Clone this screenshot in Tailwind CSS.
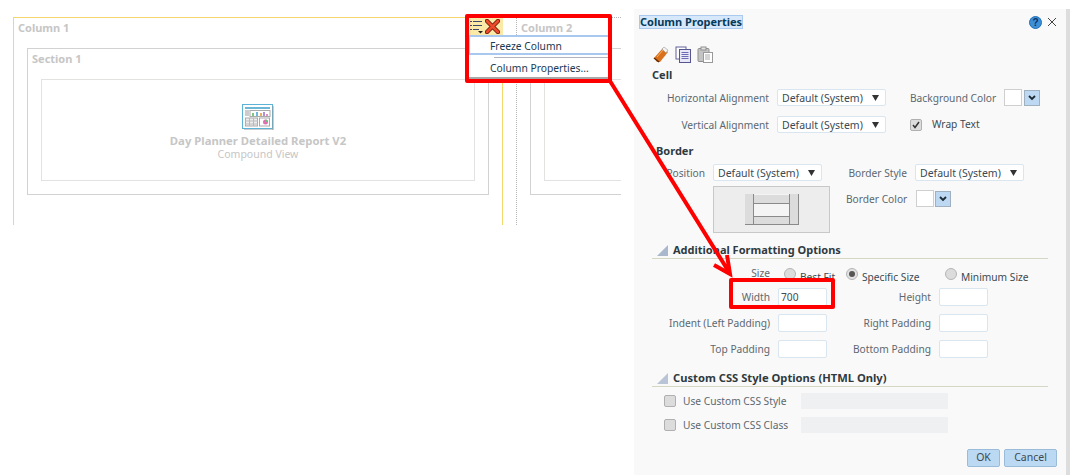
<!DOCTYPE html>
<html lang="en">
<head>
<meta charset="UTF-8">
<title>Column Properties</title>
<script src="https://cdn.jsdelivr.net/npm/@tailwindcss/browser@4"></script>
</head>
<body class="bg-white">
<div class="relative w-[1072px] h-[475px] overflow-hidden flex font-['Noto_Sans',sans-serif] text-[10.2px] leading-[14px] text-[#5c6870] whitespace-nowrap">

  <!-- Layout canvas -->
  <div class="w-[621px] h-[225px] pl-[13px] pt-[17px] flex shrink-0 text-[#c6c6c6]">
    <div class="w-[490px] h-[208px] border-t border-l border-r border-[#f5d76e] pl-[13px]">
      <div class="pl-[4px] h-[30px] pt-[3px] text-[11px] font-bold -ml-[13px]">Column 1</div>
      <div class="w-[462px] h-[147px] border border-[#d2d2d2] pl-[13px]">
        <div class="-ml-[9px] h-[30px] pt-[3px] text-[11px] font-bold">Section 1</div>
        <div class="w-[434px] h-[102px] border border-[#e2e2e0] flex flex-col items-center pt-[24px]">
          <svg width="32" height="26" viewBox="0 0 32 26" class="shrink-0">
            <rect x="0.5" y="0.5" width="30" height="24" fill="#fff" stroke="#5bb4d8"/>
            <path d="M31 2v24H2" fill="none" stroke="#999"/>
            <rect x="3" y="3" width="25" height="2" fill="#6cb6d6"/>
            <path d="M3 7h4M3 9h4M3 11h4" stroke="#999"/>
            <rect x="8" y="6.500" width="20" height="6" fill="#fff" stroke="#aaa"/>
            <rect x="10" y="9" width="2" height="3" fill="#7fc77f"/><rect x="14" y="8" width="2" height="4" fill="#6fb6e0"/><rect x="18" y="9" width="2" height="3" fill="#e8b060"/><rect x="21" y="8" width="2" height="4" fill="#b08fd8"/><rect x="24" y="10" width="2" height="2" fill="#e88fc0"/>
            <rect x="3.500" y="14" width="12" height="8" fill="#eee" stroke="#aaa"/>
            <path d="M3 17h13M3 20h13M7.500 14v8M11.500 14v8" stroke="#bbb"/>
            <rect x="17.500" y="14" width="10" height="8" fill="#fff" stroke="#aaa"/>
            <circle cx="23.500" cy="18" r="2.500" fill="#e070b0"/><path d="M23.500 18v-2.500a2.500 2.500 0 0 1 2.500 2.500z" fill="#6cc07a"/>
          </svg>
          <div class="mt-[4px] text-[11.3px] font-bold leading-[14px]">Day Planner Detailed Report V2</div>
          <div class="text-[10.5px] leading-[13px]">Compound View</div>
        </div>
      </div>
    </div>
    <div class="ml-[13px] w-[105px] h-[208px] border-t border-l border-dotted border-[#b5b5b5] overflow-hidden">
      <div class="pl-[4px] h-[30px] pt-[3px] text-[11px] font-bold">Column 2</div>
      <div class="ml-[13px] w-[200px] h-[147px] border border-[#d2d2d2] pl-[13px] pt-[30px]">
        <div class="w-[150px] h-[102px] border border-[#e2e2e0]"></div>
      </div>
    </div>
  </div>

  <!-- Column Properties dialog -->
  <div class="ml-[13px] mt-[9px] w-[436px] h-[466px] shrink-0 bg-[#f9f9f9] border-r-4 border-[#dddddd] pl-[18px]">
    <div class="flex items-center h-[26px] -ml-[12px] pr-[9px]">
      <div class="h-[14px] text-[11px] leading-[12px] bg-[#d6e8fa] border border-[#a9c9ef] text-[#063a5c] font-bold -ml-[1px]">Column Properties</div>
      <svg width="13" height="13" viewBox="0 0 13 13" class="ml-auto"><circle cx="6.500" cy="6.500" r="6" fill="#3f8fd6" stroke="#1f6fb8"/><text x="6.500" y="10" text-anchor="middle" font-size="10" font-weight="700" fill="#0c2f66" font-family="Liberation Sans">?</text></svg>
      <svg width="10" height="10" viewBox="0 0 10 10" class="ml-[5px]"><path d="M1 1l8 8M9 1l-8 8" stroke="#444" stroke-width="1"/></svg>
    </div>

    <!-- toolbar -->
    <div class="flex items-center gap-[6px] h-[18px] mt-[10px] ml-[1px]">
      <svg width="16" height="17" viewBox="0 0 16 17"><path d="M1 12L10 2l5 4-8 10H4z" fill="#d9701c"/><path d="M9 3l2-2 4 3-2 3z" fill="#f2f2f2" stroke="#888" stroke-width=".5"/><path d="M1 12l5 4" stroke="#5a2a08" stroke-width="1.500"/><path d="M4 11l6-7" stroke="#f7b36a"/></svg>
      <svg width="16" height="17" viewBox="0 0 16 17"><rect x="1" y="1" width="10" height="12" fill="#fff" stroke="#62629a"/><rect x="4.500" y="3.500" width="11" height="13" fill="#e8e8f6" stroke="#55558f"/><path d="M6.500 6.500h7M6.500 8.500h7M6.500 10.500h7M6.500 12.500h7" stroke="#6c6cb4"/></svg>
      <svg width="16" height="17" viewBox="0 0 16 17"><rect x="1" y="2.500" width="11" height="13" rx="1" fill="#c4c4c4" stroke="#8f8f8f"/><rect x="4" y="1" width="5" height="3" fill="#e2e2e2" stroke="#8f8f8f"/><rect x="6.500" y="6.500" width="9" height="10" fill="#fff" stroke="#9a9a9a"/><path d="M8 9h5M8 11h5M8 13h5" stroke="#aaa"/></svg>
    </div>

    <div class="h-[14px] mt-[5px] text-[11px] text-[#2f3a40] font-bold">Cell</div>

    <!-- Cell rows -->
    <div class="flex items-center mt-[7px] h-[17px]">
      <div class="w-[117px] text-right shrink-0">Horizontal Alignment</div>
      <div class="ml-[8px] w-[109px] h-[17px] flex items-center justify-between pl-[4px] pr-[6px] bg-white border border-[#d9e5ef] rounded-[2px] text-[10.5px] text-[#3c4a52]">Default (System)<svg width="7" height="6" viewBox="0 0 7 6"><path d="M0 0h7L3.500 6z" fill="#333"/></svg></div>
      <div class="ml-[24px] w-[85px] shrink-0">Background Color</div>
      <div class="ml-[9px] w-[18px] h-[17px] bg-white border border-[#cfcfcf]"></div>
      <div class="ml-[2px] w-[16px] h-[16px] bg-[#bcd8f2] border border-[#9fb0c0] flex items-center justify-center"><svg width="8" height="6" viewBox="0 0 8 6"><path d="M1 1l3 3 3-3" fill="none" stroke="#1d2a33" stroke-width="1.800"/></svg></div>
    </div>
    <div class="flex items-center mt-[10px] h-[17px]">
      <div class="w-[117px] text-right shrink-0">Vertical Alignment</div>
      <div class="ml-[8px] w-[109px] h-[17px] flex items-center justify-between pl-[4px] pr-[6px] bg-white border border-[#d9e5ef] rounded-[2px] text-[10.5px] text-[#3c4a52]">Default (System)<svg width="7" height="6" viewBox="0 0 7 6"><path d="M0 0h7L3.500 6z" fill="#333"/></svg></div>
      <div class="ml-[24px] w-[12px] h-[12px] rounded-[2px] bg-[#dcdcdc] border border-[#b0b0b0] flex items-center justify-center"><svg width="8" height="8" viewBox="0 0 8 8"><path d="M1 4l2 2.500L7 1" fill="none" stroke="#333" stroke-width="1.500"/></svg></div>
      <div class="ml-[10px] text-[#3c4a52] -mt-[2px]">Wrap Text</div>
    </div>

    <div class="h-[14px] mt-[11px] ml-[4px] text-[11px] text-[#2f3a40] font-bold">Border</div>

    <!-- Border rows -->
    <div class="flex items-center mt-[6px] h-[17px]">
      <div class="w-[53px] text-right shrink-0">Position</div>
      <div class="ml-[8px] w-[109px] h-[17px] flex items-center justify-between pl-[4px] pr-[6px] bg-white border border-[#d9e5ef] rounded-[2px] text-[10.5px] text-[#3c4a52]">Default (System)<svg width="7" height="6" viewBox="0 0 7 6"><path d="M0 0h7L3.500 6z" fill="#333"/></svg></div>
      <div class="ml-[26px] w-[59px] shrink-0 text-right">Border Style</div>
      <div class="ml-[8px] w-[109px] h-[17px] flex items-center justify-between pl-[4px] pr-[6px] bg-white border border-[#d9e5ef] rounded-[2px] text-[10.5px] text-[#3c4a52]">Default (System)<svg width="7" height="6" viewBox="0 0 7 6"><path d="M0 0h7L3.500 6z" fill="#333"/></svg></div>
    </div>
    <div class="flex items-start mt-[5px] ml-[61px]">
      <div class="w-[117px] h-[47px] bg-[#ededed] border border-[#c8c8c8] flex items-center justify-center">
        <svg width="54" height="31" viewBox="0 0 54 31"><rect x="0" y="0" width="53" height="30" fill="#f4f4f4"/><rect x="0" y="0" width="8" height="30" fill="#dcdcdc"/><rect x="45" y="0" width="8" height="30" fill="#dcdcdc"/><rect x="9" y="1" width="35" height="8" fill="#dcdcdc"/><rect x="9" y="22" width="35" height="8" fill="#dcdcdc"/><path d="M8.500 0v30M44.500 0v30M9 9.500h35M9 22.500h35M53.500 0v31M0 30.500h54" stroke="#8a8a8a"/></svg>
      </div>
      <div class="ml-[16px] mt-[6px] w-[61px] text-right shrink-0">Border Color</div>
      <div class="ml-[9px] mt-[4px] w-[18px] h-[17px] bg-white border border-[#cfcfcf]"></div>
      <div class="ml-[1px] mt-[5px] w-[16px] h-[16px] bg-[#bcd8f2] border border-[#9fb0c0] flex items-center justify-center"><svg width="8" height="6" viewBox="0 0 8 6"><path d="M1 1l3 3 3-3" fill="none" stroke="#1d2a33" stroke-width="1.800"/></svg></div>
    </div>

    <!-- Additional Formatting Options -->
    <div class="flex items-center h-[16px] mt-[9px] ml-[5px] text-[11px] text-[#2f3a40] font-bold">
      <svg width="11" height="11" viewBox="0 0 11 11"><path d="M11 0v11H0z" fill="#a9b8cc"/></svg>
      <span class="ml-[5px]">Additional Formatting Options</span>
    </div>
    <div class="w-[396px] h-[1px] bg-[#d6d6c4]"></div>

    <div class="flex items-center h-[18px] mt-[9px]">
      <div class="w-[118px] text-right shrink-0 -mt-[8px]">Size</div>
      <div class="ml-[14px] w-[12px] h-[12px] rounded-full bg-[#dcdcdc] border border-[#b5b5b5] -mt-[6px]"></div>
      <div class="ml-[4px] w-[46px] shrink-0 text-[#3c4a52]">Best Fit</div>
      <div class="w-[12px] h-[12px] rounded-full bg-[#e2e2e2] border border-[#b5b5b5] flex items-center justify-center -mt-[6px]"><div class="w-[6px] h-[6px] rounded-full bg-[#555]"></div></div>
      <div class="ml-[4px] w-[83px] shrink-0 text-[#3c4a52]">Specific Size</div>
      <div class="w-[12px] h-[12px] rounded-full bg-[#dcdcdc] border border-[#b5b5b5] -mt-[6px]"></div>
      <div class="ml-[4px] text-[#3c4a52]">Minimum Size</div>
    </div>
    <div class="flex items-center mt-[2px] h-[18px]">
      <div class="w-[118px] text-right shrink-0">Width</div>
      <div class="ml-[8px] w-[49px] h-[18px] bg-white border border-[#d9e5ef] rounded-[2px] pl-[2px] pt-[1px] text-[#3c4a52]">700</div>
      <div class="w-[104px] text-right shrink-0">Height</div>
      <div class="ml-[8px] w-[49px] h-[18px] bg-white border border-[#d9e5ef] rounded-[2px]"></div>
    </div>
    <div class="flex items-center mt-[8px] h-[18px]">
      <div class="w-[118px] text-right shrink-0">Indent (Left Padding)</div>
      <div class="ml-[8px] w-[49px] h-[18px] bg-white border border-[#d9e5ef] rounded-[2px]"></div>
      <div class="w-[104px] text-right shrink-0">Right Padding</div>
      <div class="ml-[8px] w-[49px] h-[18px] bg-white border border-[#d9e5ef] rounded-[2px]"></div>
    </div>
    <div class="flex items-center mt-[8px] h-[18px]">
      <div class="w-[118px] text-right shrink-0">Top Padding</div>
      <div class="ml-[8px] w-[49px] h-[18px] bg-white border border-[#d9e5ef] rounded-[2px]"></div>
      <div class="w-[104px] text-right shrink-0">Bottom Padding</div>
      <div class="ml-[8px] w-[49px] h-[18px] bg-white border border-[#d9e5ef] rounded-[2px]"></div>
    </div>

    <!-- Custom CSS -->
    <div class="flex items-center h-[16px] mt-[12px] ml-[5px] text-[11.2px] text-[#2f3a40] font-bold">
      <svg width="11" height="11" viewBox="0 0 11 11"><path d="M11 0v11H0z" fill="#b9c5d6"/></svg>
      <span class="ml-[5px]">Custom CSS Style Options (HTML Only)</span>
    </div>
    <div class="w-[396px] h-[1px] bg-[#d6d6c4]"></div>
    <div class="flex items-center mt-[6px] h-[16px] ml-[12px]">
      <div class="w-[12px] h-[12px] rounded-[2px] bg-[#dcdcdc] border border-[#b0b0b0]"></div>
      <div class="ml-[7px] w-[118px] shrink-0">Use Custom CSS Style</div>
      <div class="w-[147px] h-[16px] bg-[#eff0f1]"></div>
    </div>
    <div class="flex items-center mt-[8px] h-[16px] ml-[12px]">
      <div class="w-[12px] h-[12px] rounded-[2px] bg-[#dcdcdc] border border-[#b0b0b0]"></div>
      <div class="ml-[7px] w-[118px] shrink-0">Use Custom CSS Class</div>
      <div class="w-[147px] h-[16px] bg-[#eff0f1]"></div>
    </div>
    <div class="flex justify-end gap-[4px] mt-[16px] pr-[9px]">
      <div class="w-[33px] h-[18px] rounded-[2px] bg-[#bcd9f3] border border-[#9bbcd8] text-center text-[10.5px] text-[#3c4a52]">OK</div>
      <div class="w-[53px] h-[18px] rounded-[2px] bg-[#bcd9f3] border border-[#9bbcd8] text-center text-[10.5px] text-[#3c4a52]">Cancel</div>
    </div>
  </div>

  <!-- Column hover toolbar and menu -->
  <div class="absolute left-[469px] top-[18px] w-[34px] h-[17px] bg-[#fbe9a8] flex items-center pl-[1px] gap-[2px]">
    <svg width="13" height="15" viewBox="0 0 13 15"><path d="M0 2.500h2M3 2.500h9M0 6.500h2M3 6.500h9M0 10.500h2M3 10.500h6" stroke="#3a4a6a"/><path d="M8 12h5l-2.500 2.500z" fill="#222"/></svg>
    <svg width="15" height="15" viewBox="0 0 15 15"><path d="M2 2l11 11M13 2L2 13" stroke="#7a2010" stroke-width="4.500" stroke-linecap="round"/><path d="M2 2l11 11M13 2L2 13" stroke="#ec4a2a" stroke-width="2.500" stroke-linecap="round"/></svg>
  </div>
  <div class="absolute left-[468px] top-[35px] w-[142px] h-[45px] bg-white border-b-[3px] border-[#a8a8a8] text-[10.3px] text-[#1d3a50]">
    <div class="h-[20px] border-2 border-[#a8c8f0] pl-[20px] leading-[19px]">Freeze Column</div>
    <div class="h-[1px] bg-[#b0b4bc] ml-[26px] mt-[2px]"></div>
    <div class="pl-[22px] mt-[3px] leading-[14px]">Column Properties...</div>
  </div>

  <!-- Red annotations -->
  <div class="absolute left-[465px] top-[14px] w-[147px] h-[69px] border-4 border-[#ff0000] rounded-[2px]"></div>
  <div class="absolute left-[729px] top-[278px] w-[106px] h-[31px] border-4 border-[#ff0000] rounded-[2px]"></div>
  <svg class="absolute left-0 top-0 pointer-events-none" width="1072" height="475" viewBox="0 0 1072 475">
    <path d="M610 81L729 272M714 265L730 274L727 255" fill="none" stroke="#ff0000" stroke-width="4"/>
  </svg>
</div>
</body>
</html>
